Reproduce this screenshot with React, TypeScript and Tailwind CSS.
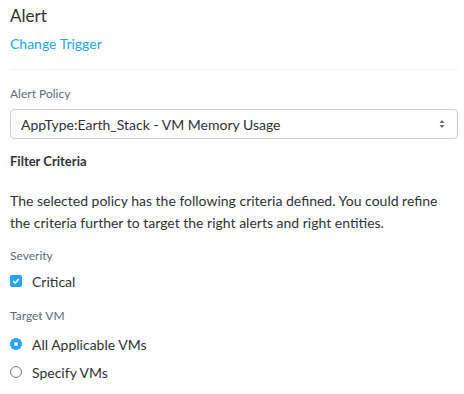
import { useState } from 'react';

const font = { fontFamily: 'Lato, "Noto Sans", sans-serif' };

export default function App() {
  const [critical, setCritical] = useState(true);
  const [target, setTarget] = useState('all');

  return (
    <div className="min-h-screen bg-white pl-[10px] pr-[6px] text-[#2f3337]" style={font}>
      <h1 className="mt-[6px] text-[17px] leading-[20px]">Alert</h1>
      <a className="mt-[8px] block text-[14px] leading-[20px] text-[#22a5f7]" href="#">
        Change Trigger
      </a>
      <div className="mt-[15px] h-px bg-[#eef0f2]" />

      <div className="mt-[16px] text-[12px] leading-[16px] text-[#5c6b7c]">Alert Policy</div>
      <div className="mt-[7px] flex h-[30px] items-center justify-between rounded-[4px] border border-[#c9ced6] pl-[10px] pr-[12px]">
        <span className="text-[14px]">AppType:Earth_Stack - VM Memory Usage</span>
        <svg width="6" height="10" viewBox="0 0 6 10" className="text-[#5c6b7c]">
          <path d="M0.5 4 L3 1 L5.5 4 Z M0.5 6 L3 9 L5.5 6 Z" fill="currentColor" />
        </svg>
      </div>

      <div className="mt-[13px] text-[13px] font-bold leading-[18px]">Filter Criteria</div>
      <p className="mt-[20px] text-[14px] leading-[22px]">
        The selected policy has the following criteria defined. You could refine the criteria
        further to target the right alerts and right entities.
      </p>

      <div className="mt-[14px] text-[12px] leading-[16px] text-[#5c6b7c]">Severity</div>
      <label className="mt-[7px] flex h-[20px] items-center gap-[10px] text-[14px]" onClick={() => setCritical(!critical)}>
        <span
          className={
            critical
              ? 'flex h-[12px] w-[12px] items-center justify-center rounded-[2px] bg-[#22a5f7]'
              : 'h-[12px] w-[12px] rounded-[2px] border border-[#8a95a3]'
          }
        >
          {critical && (
            <svg width="8" height="8" viewBox="0 0 8 8">
              <path d="M1.2 4.2 L3.2 6 L6.8 2" stroke="white" strokeWidth="1.6" fill="none" />
            </svg>
          )}
        </span>
        Critical
      </label>

      <div className="mt-[17px] text-[12px] leading-[16px] text-[#5c6b7c]">Target VM</div>
      <div className="mt-[10px] flex flex-col gap-[8px] text-[14px]">
        {[
          ['all', 'All Applicable VMs'],
          ['specify', 'Specify VMs'],
        ].map(([key, text]) => (
          <label key={key} className="flex h-[20px] items-center gap-[10px]" onClick={() => setTarget(key)}>
            {target === key ? (
              <span className="flex h-[12px] w-[12px] items-center justify-center rounded-full bg-[#22a5f7]">
                <span className="h-[4px] w-[4px] rounded-full bg-white" />
              </span>
            ) : (
              <span className="h-[12px] w-[12px] rounded-full border border-[#6f7b8a]" />
            )}
            {text}
          </label>
        ))}
      </div>
    </div>
  );
}
